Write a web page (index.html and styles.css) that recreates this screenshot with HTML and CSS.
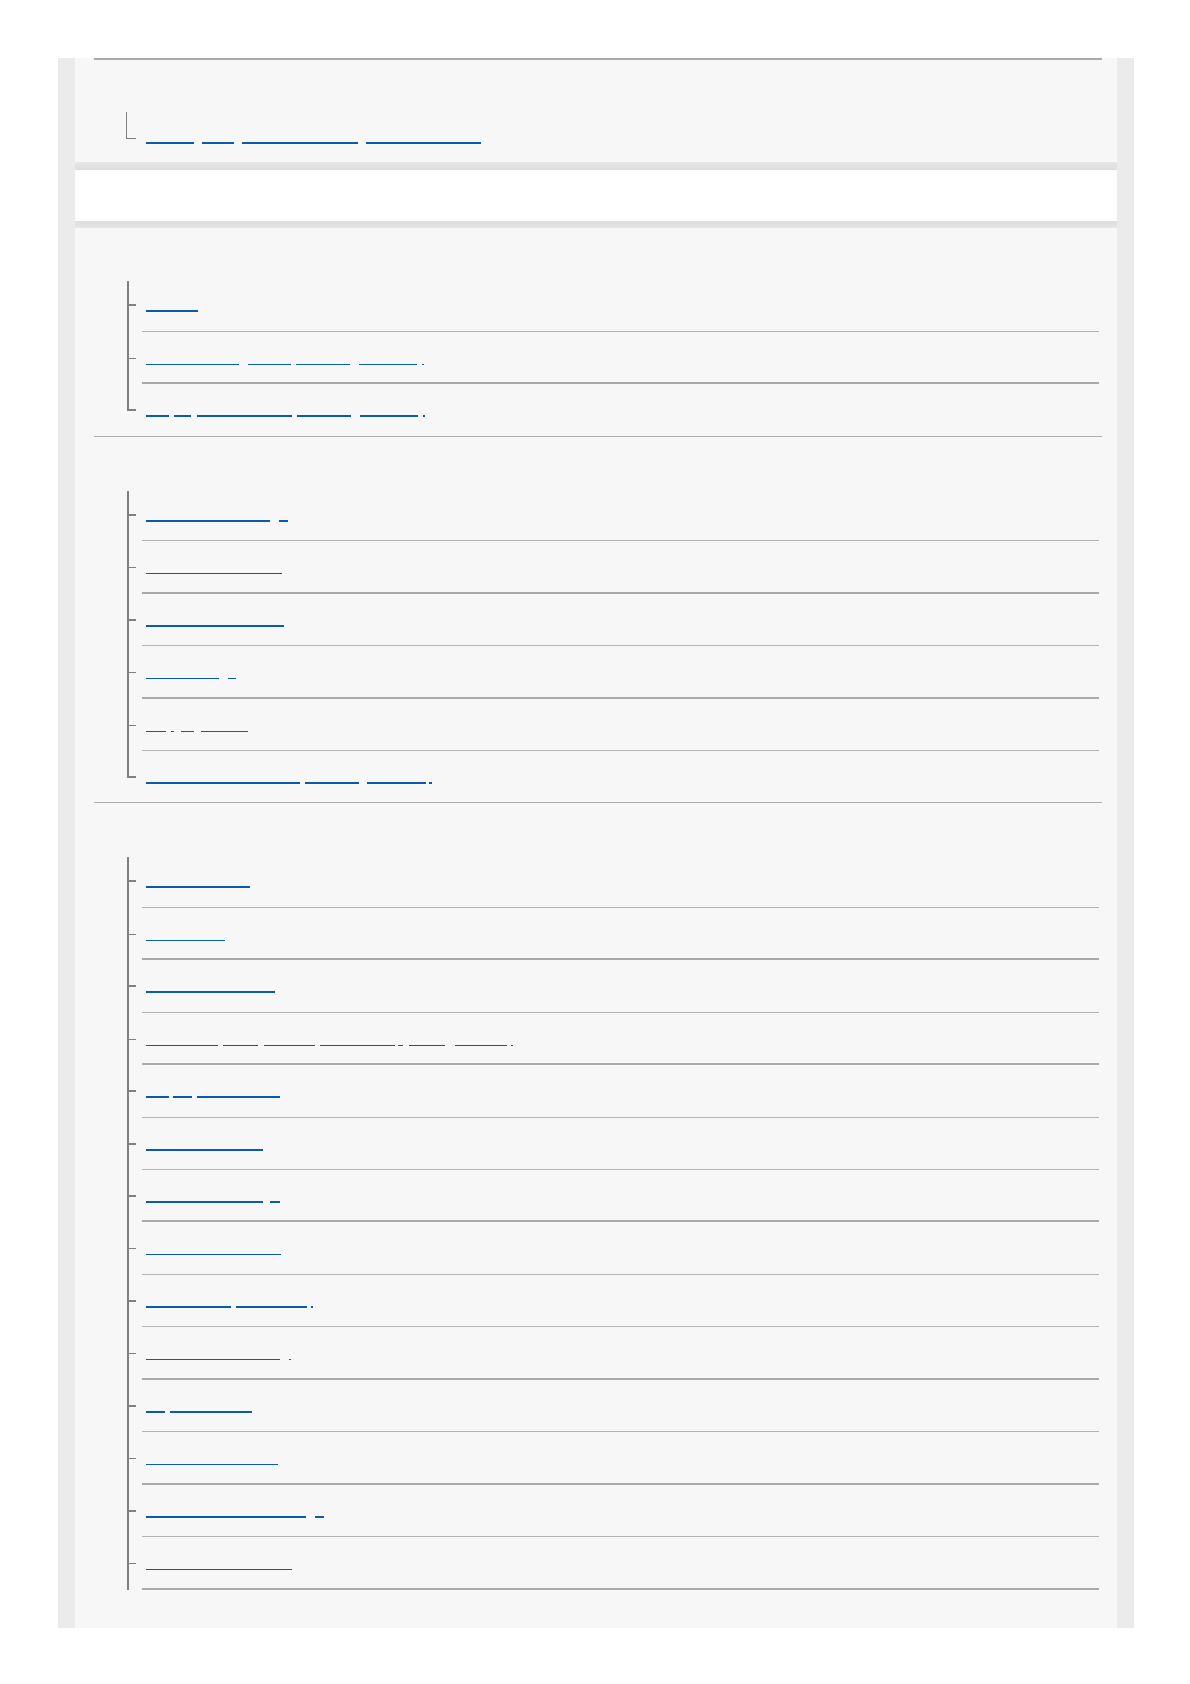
FILE: index.html
```
<!DOCTYPE html>
<html lang="en">
<head>
    <meta charset="UTF-8">
    <meta name="viewport" content="width=device-width, initial-scale=1.0">
    <title>Help Guide - Contents</title>
    <link rel="stylesheet" href="styles.css">
</head>
<body>
  <div class="page">
    <div class="panel">

      <section class="group group-top">
        <ul class="tree tree-thin">
          <li class="row"><a class="toc-link" href="#"><span class="seg" style="width:48px"></span><span class="seg" style="width:32px;margin-left:8px"></span><span class="seg" style="width:116px;margin-left:8px"></span><span class="seg" style="width:115px;margin-left:8px"></span></a></li>
        </ul>
      </section>

      <div class="bar"></div>

      <section class="group group-first">
        <ul class="tree">
          <li class="row"><a class="toc-link" href="#"><span class="seg" style="width:52px"></span></a></li>
          <li class="row thin bold"><a class="toc-link" href="#"><span class="seg" style="width:93px"></span><span class="seg" style="width:43px;margin-left:9px"></span><span class="seg" style="width:54px;margin-left:5px"></span><span class="seg" style="width:58px;margin-left:9px"></span><span class="seg" style="width:2px;margin-left:5px"></span></a></li>
          <li class="row"><a class="toc-link" href="#"><span class="seg" style="width:23px"></span><span class="seg" style="width:17px;margin-left:5px"></span><span class="seg" style="width:95px;margin-left:6px"></span><span class="seg" style="width:54px;margin-left:5px"></span><span class="seg" style="width:58px;margin-left:9px"></span><span class="seg" style="width:2px;margin-left:5px"></span></a></li>
        </ul>
      </section>

      <section class="group">
        <ul class="tree">
          <li class="row"><a class="toc-link" href="#"><span class="seg" style="width:124px"></span><span class="seg" style="width:9px;margin-left:9px"></span></a></li>
          <li class="row thin bold"><a class="toc-link" href="#"><span class="seg" style="width:136px"></span></a></li>
          <li class="row"><a class="toc-link" href="#"><span class="seg" style="width:138px"></span></a></li>
          <li class="row thin bold"><a class="toc-link" href="#"><span class="seg" style="width:73px"></span><span class="seg" style="width:8px;margin-left:9px"></span></a></li>
          <li class="row thin"><a class="toc-link" href="#"><span class="seg" style="width:20px"></span><span class="seg" style="width:3px;margin-left:5px"></span><span class="seg" style="width:13px;margin-left:7px"></span><span class="seg" style="width:47px;margin-left:7px"></span></a></li>
          <li class="row"><a class="toc-link" href="#"><span class="seg" style="width:154px"></span><span class="seg" style="width:54px;margin-left:5px"></span><span class="seg" style="width:59px;margin-left:8px"></span><span class="seg" style="width:3px;margin-left:3px"></span></a></li>
        </ul>
      </section>

      <section class="group group-last">
        <ul class="tree">
          <li class="row"><a class="toc-link" href="#"><span class="seg" style="width:104px"></span></a></li>
          <li class="row thin bold"><a class="toc-link" href="#"><span class="seg" style="width:79px"></span></a></li>
          <li class="row"><a class="toc-link" href="#"><span class="seg" style="width:129px"></span></a></li>
          <li class="row thin bold"><a class="toc-link" href="#"><span class="seg" style="width:72px"></span><span class="seg" style="width:35px;margin-left:5px"></span><span class="seg" style="width:51px;margin-left:6px"></span><span class="seg" style="width:75px;margin-left:5px"></span><span class="seg" style="width:5px;margin-left:3px"></span><span class="seg" style="width:36px;margin-left:6px"></span><span class="seg" style="width:52px;margin-left:10px"></span><span class="seg" style="width:2px;margin-left:4px"></span></a></li>
          <li class="row"><a class="toc-link" href="#"><span class="seg" style="width:23px"></span><span class="seg" style="width:19px;margin-left:4px"></span><span class="seg" style="width:83px;margin-left:5px"></span></a></li>
          <li class="row"><a class="toc-link" href="#"><span class="seg" style="width:117px"></span></a></li>
          <li class="row bold"><a class="toc-link" href="#"><span class="seg" style="width:117px"></span><span class="seg" style="width:10px;margin-left:7px"></span></a></li>
          <li class="row thin"><a class="toc-link" href="#"><span class="seg" style="width:135px"></span></a></li>
          <li class="row"><a class="toc-link" href="#"><span class="seg" style="width:85px"></span><span class="seg" style="width:71px;margin-left:5px"></span><span class="seg" style="width:2px;margin-left:4px"></span></a></li>
          <li class="row thin bold"><a class="toc-link" href="#"><span class="seg" style="width:134px"></span><span class="seg" style="width:2px;margin-left:9px"></span></a></li>
          <li class="row"><a class="toc-link" href="#"><span class="seg" style="width:19px"></span><span class="seg" style="width:82px;margin-left:5px"></span></a></li>
          <li class="row thin bold"><a class="toc-link" href="#"><span class="seg" style="width:132px"></span></a></li>
          <li class="row"><a class="toc-link" href="#"><span class="seg" style="width:160px"></span><span class="seg" style="width:9px;margin-left:9px"></span></a></li>
          <li class="row thin bold"><a class="toc-link" href="#"><span class="seg" style="width:146px"></span></a></li>
        </ul>
      </section>

    </div>
  </div>
</body>
</html>
```

FILE: styles.css
```
body {
    margin: 0;
    background-color: #fff;
    font-family: "Liberation Sans", Arial, sans-serif;
}
.page {
    box-sizing: border-box;
    width: 1076px;
    margin: 58px 0 0 58px;
    padding: 0 17px;
    background-color: #ebebeb;
}
.panel {
    background-color: #f7f7f7;
    padding-bottom: 38px;
}

/* sections of the contents tree */
.group {
    margin: 0 15px 0 19px;
    padding-top: 52px;
    border-bottom: 1px solid #adadad;
}
.group-top {
    border-top: 2px solid #aaa;
    border-bottom: none;
    padding-top: 51px;
}
.group-first {
    padding-top: 51px;
}
.group-last {
    border-bottom: none;
}
.bar {
    height: 66px;
    background: linear-gradient(#e8e8e8, #dcdcdc 8px, #fff 8px, #fff 59px, #dcdcdc 59px, #e8e8e8);
}

.tree {
    list-style: none;
    margin: 0 3px 0 48px;
    padding: 0;
}
.row {
    position: relative;
    box-sizing: border-box;
    height: 52.44px;
    padding: 31px 0 0 4px;
    border-bottom: 1px solid #b4b4b4;
}
.row.bold {
    border-bottom: 2px solid #aaa;
}
.row.thin {
    padding-top: 32px;
}
/* tree lines */
.row::before {
    content: "";
    position: absolute;
    left: -15px;
    top: 0;
    bottom: -2px;
    width: 2px;
    background-color: #808080;
}
.row:first-child::before {
    top: 2px;
}
.row:last-child::before {
    bottom: auto;
    height: 27px;
}
.row::after {
    content: "";
    position: absolute;
    left: -15px;
    top: 25px;
    width: 9px;
    height: 2px;
    background-color: #808080;
}
.row.thin::after {
    top: 26px;
    height: 1px;
}
.group .row:last-child {
    border-bottom: none;
    height: 51.44px;
}
.group-last .row:last-child {
    border-bottom: 2px solid #aaa;
    height: 52.44px;
}
.group-last .row:last-child::before {
    bottom: -2px;
    height: auto;
}

.tree-thin .row {
    height: 51px;
}
.tree-thin .row::before {
    left: -16px;
    top: 1px;
    width: 1px;
    height: 26px;
}
.tree-thin .row::after {
    left: -16px;
    top: 27px;
    width: 10px;
    height: 1px;
}

.toc-link {
    display: flex;
    align-items: flex-start;
    text-decoration: none;
}
.seg {
    display: block;
    flex: none;
    height: 2px;
    background-color: #0b5aad;
}
.row.thin .seg {
    height: 1px;
}
```
